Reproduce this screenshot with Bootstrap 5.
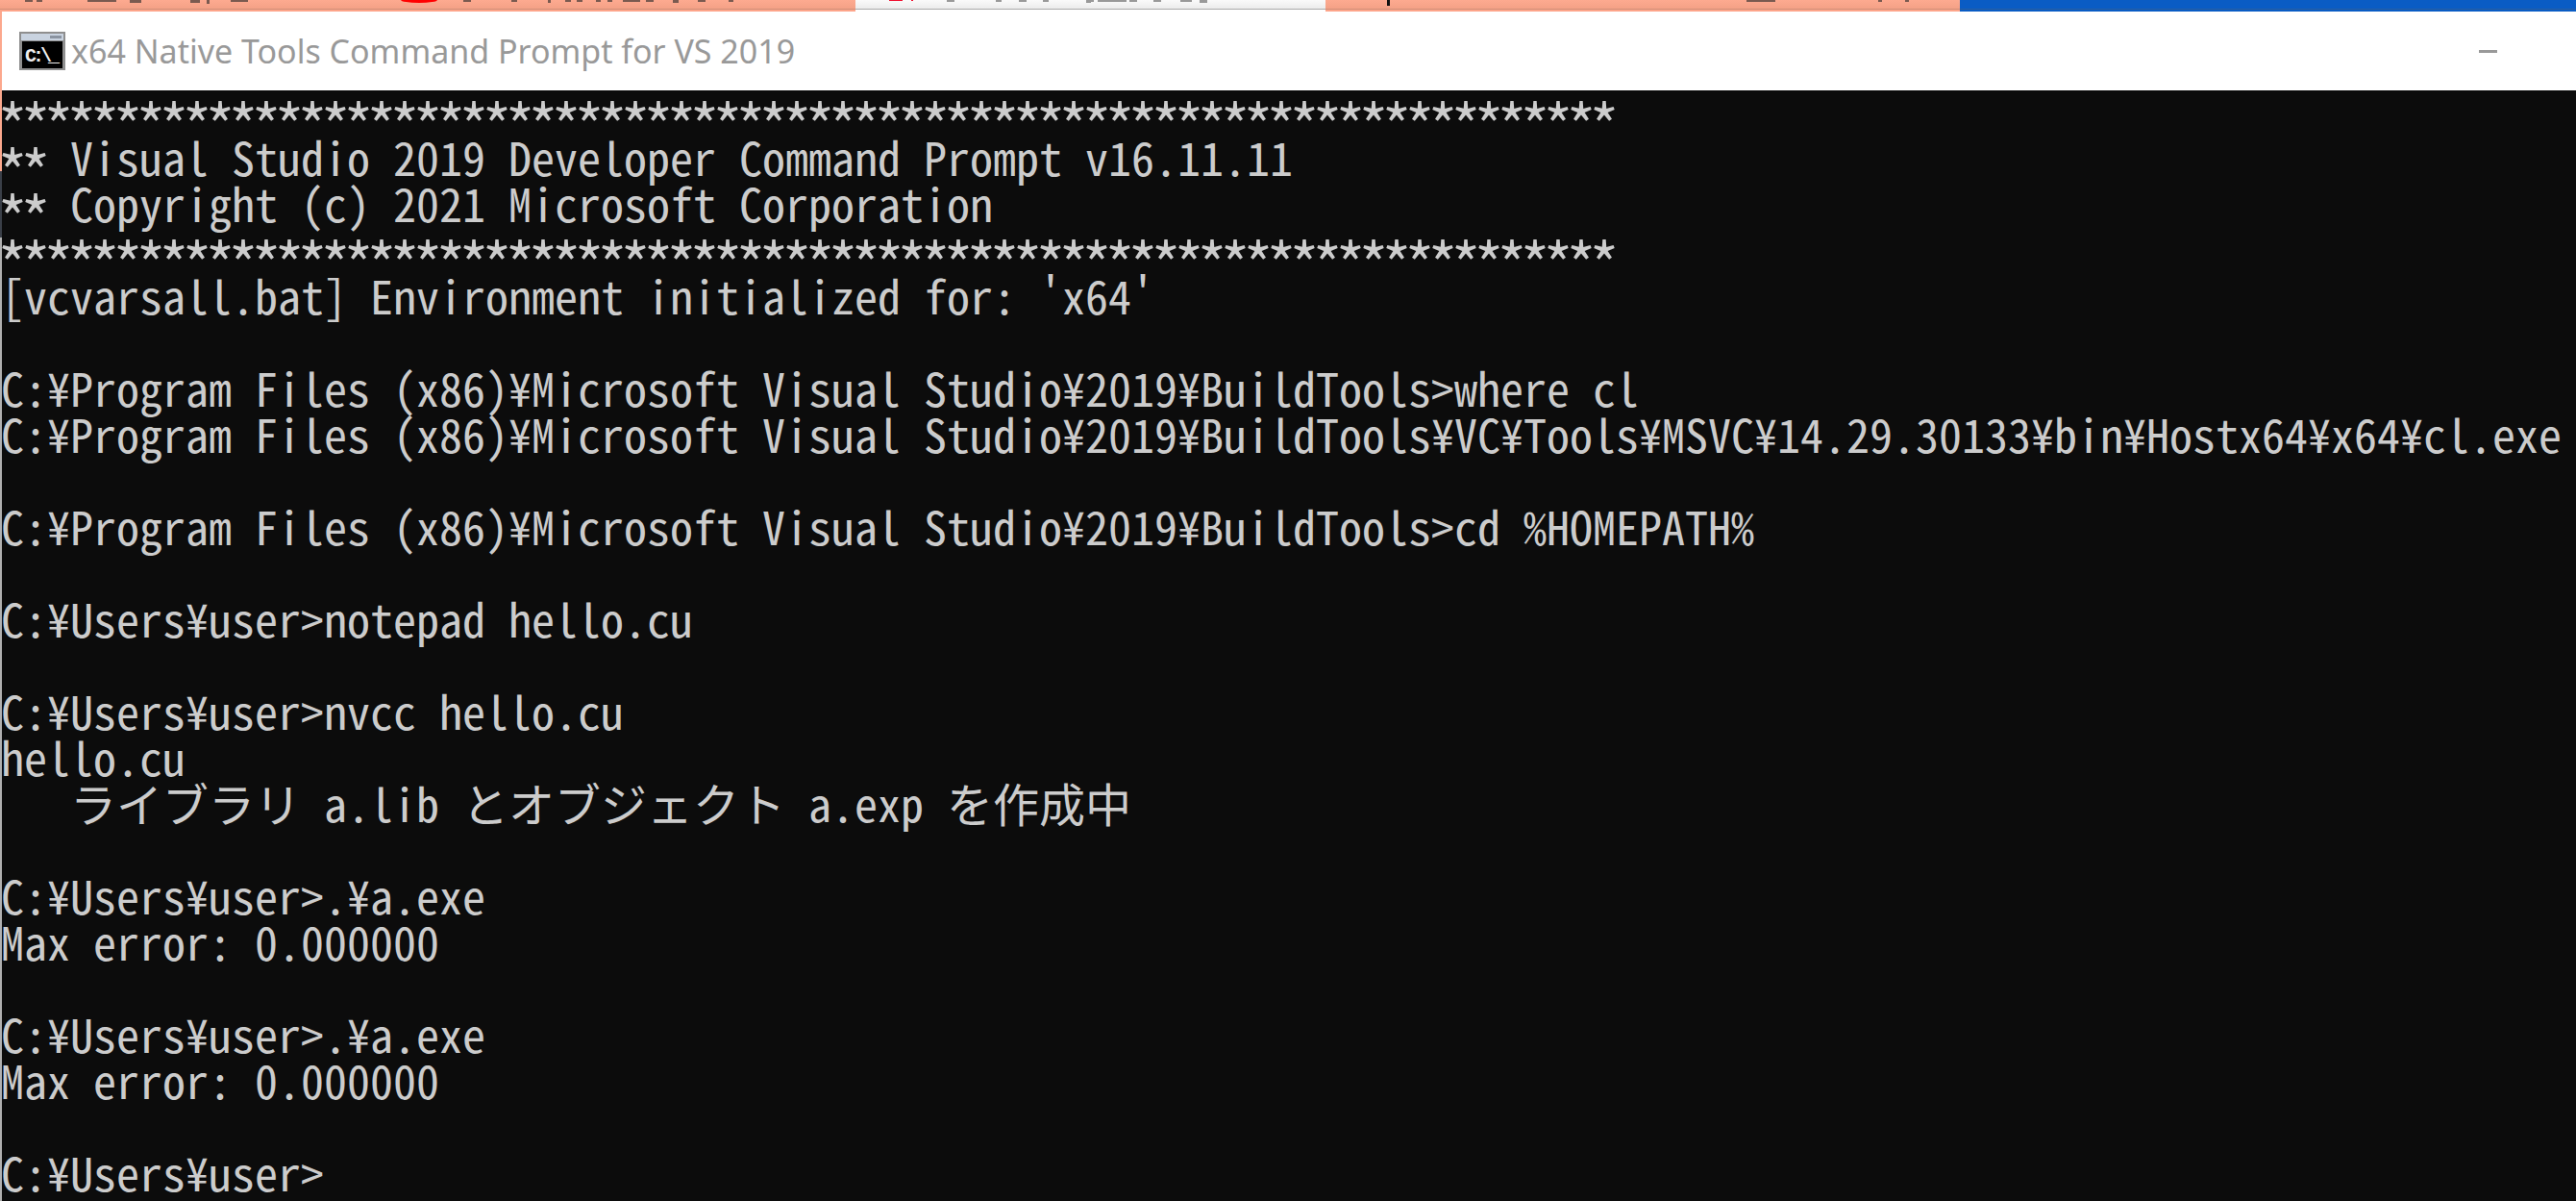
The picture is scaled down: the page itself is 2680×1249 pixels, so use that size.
<!DOCTYPE html>
<html lang="ja"><head><meta charset="utf-8"><title>cmd</title>
<link href="https://cdn.jsdelivr.net/npm/bootstrap@5.3.0/dist/css/bootstrap.min.css" rel="stylesheet">
<style>
html,body{height:100%;overflow:hidden;background:#fff}
.strip{display:block;width:2680px;height:12px}
.win-body{height:1237px}
.edge{width:2px;flex:none;background:#b0b0b0}
.edge-peach{height:166px;background:#fca88d}
.edge-dark{height:69px;background:#3a3f48}
.win-main{min-width:0}
.tbar{height:82px;background:#fff;padding-left:18px;font-family:"Noto Sans","Liberation Sans",sans-serif;font-size:34px;color:#999}
.tbar svg{flex:none;margin-right:6px}
.term{flex:1 1 auto;background:#0c0c0c;color:#ccc;font-family:"Noto Sans Mono CJK JP","Noto Sans CJK JP",monospace;font-size:48px;line-height:48px;white-space:pre;overflow:hidden}
.term-lines{margin-top:-4px;margin-left:-1px}
.stars{display:block;box-sizing:border-box;height:48px;padding-top:14px;font-size:64px;line-height:48px;letter-spacing:-8px;margin-left:-4px}
.stars-in{display:inline-block;vertical-align:top;box-sizing:border-box;width:48px;height:48px;padding-top:14px;font-size:64px;line-height:48px;letter-spacing:-8px;margin-left:-4px;margin-right:4px}
.winmin{width:19px;height:3px;background:#999;margin-right:82px;flex:none}
</style></head><body>
<svg class="strip" viewBox="0 0 2680 12" aria-hidden="true">
<defs><linearGradient id="pg" x1="0" y1="0" x2="0" y2="1"><stop offset="0" stop-color="#fdaa90"/><stop offset="1" stop-color="#f4a186"/></linearGradient>
<linearGradient id="tg" x1="0" y1="0" x2="0" y2="1"><stop offset="0" stop-color="#fafafa"/><stop offset="1" stop-color="#ececec"/></linearGradient></defs>
<rect width="2680" height="12" fill="#fda58a"/>
<rect width="890" height="9" fill="url(#pg)"/><rect y="9" width="890" height="1" fill="#d08e78"/>
<rect x="890" width="489" height="12" fill="#fff"/><rect x="890" width="489" height="9" fill="url(#tg)"/><rect x="890" y="9" width="489" height="1" fill="#aaa"/>
<rect x="1379" width="660" height="9" fill="url(#pg)"/><rect x="1379" y="9" width="660" height="1" fill="#d08e78"/>
<rect x="2039" width="641" height="12" fill="#0a5cc4"/><rect x="2039" y="9" width="641" height="1" fill="#2a5e9e"/>
<g fill="#7a5a50">
<rect x="26" width="8" height="2"/><rect x="38" width="6" height="2"/><rect x="91" width="30" height="2"/><rect x="135" width="12" height="3"/><rect x="198" width="10" height="3"/><rect x="215" width="3" height="4"/><rect x="240" width="18" height="2"/><rect x="482" width="8" height="2"/>
<rect x="532" width="6" height="2"/><rect x="570" width="3" height="3"/><rect x="588" width="6" height="2"/><rect x="600" width="6" height="2"/><rect x="620" width="5" height="2"/><rect x="632" width="5" height="2"/><rect x="648" width="18" height="2"/><rect x="672" width="8" height="2"/><rect x="700" width="6" height="3"/><rect x="726" width="8" height="2"/><rect x="758" width="5" height="2"/>
<rect x="1817" width="30" height="2"/><rect x="1954" width="4" height="2"/><rect x="1982" width="4" height="2"/>
</g>
<rect x="1443" width="3" height="6" fill="#111"/>
<rect x="925" width="14" height="1" fill="#f01030"/><rect x="948" width="2" height="1" fill="#f01030"/>
<g fill="#999"><rect x="985" width="8" height="2"/><rect x="1036" width="6" height="2"/><rect x="1060" width="8" height="2"/><rect x="1085" width="6" height="2"/><rect x="1130" width="5" height="3"/><rect x="1135" width="3" height="2"/><rect x="1142" width="30" height="2"/><rect x="1175" width="8" height="2"/><rect x="1200" width="8" height="2"/><rect x="1228" width="12" height="2"/><rect x="1248" y="0" width="8" height="3"/></g>
<ellipse cx="436" cy="0" rx="19" ry="3" fill="#f00"/>
</svg>
<div class="d-flex win-body">
<div class="edge"><div class="edge-peach"></div><div class="edge-dark"></div></div>
<div class="win-main d-flex flex-column flex-grow-1">
<div class="d-flex align-items-center tbar">
<svg width="48" height="40" viewBox="0 0 48 40" aria-hidden="true"><rect width="48" height="40" fill="#8f8f8f"/><rect x="2" y="2" width="44" height="7" fill="#c9d3e0"/><rect x="32" y="4" width="12" height="3" fill="#8a93a0"/><rect x="3" y="10" width="42" height="28" fill="#000"/><text x="6" y="31" font-family="Liberation Mono,monospace" font-weight="700" font-size="20" textLength="36" fill="#eee">C:\_</text></svg>
<span>x64 Native Tools Command Prompt for VS 2019</span><div class="winmin ms-auto"></div></div>
<div class="term"><div class="term-lines"><span class="stars">**********************************************************************</span><span class="stars-in">**</span> Visual Studio 2019 Developer Command Prompt v16.11.11
<span class="stars-in">**</span> Copyright (c) 2021 Microsoft Corporation
<span class="stars">**********************************************************************</span>[vcvarsall.bat] Environment initialized for: 'x64'

C:¥Program Files (x86)¥Microsoft Visual Studio¥2019¥BuildTools>where cl
C:¥Program Files (x86)¥Microsoft Visual Studio¥2019¥BuildTools¥VC¥Tools¥MSVC¥14.29.30133¥bin¥Hostx64¥x64¥cl.exe

C:¥Program Files (x86)¥Microsoft Visual Studio¥2019¥BuildTools>cd %HOMEPATH%

C:¥Users¥user>notepad hello.cu

C:¥Users¥user>nvcc hello.cu
hello.cu
   ライブラリ a.lib とオブジェクト a.exp を作成中

C:¥Users¥user>.¥a.exe
Max error: 0.000000

C:¥Users¥user>.¥a.exe
Max error: 0.000000

C:¥Users¥user></div></div>
</div></div>
<script src="https://cdn.jsdelivr.net/npm/bootstrap@5.3.0/dist/js/bootstrap.bundle.min.js"></script>
</body></html>
